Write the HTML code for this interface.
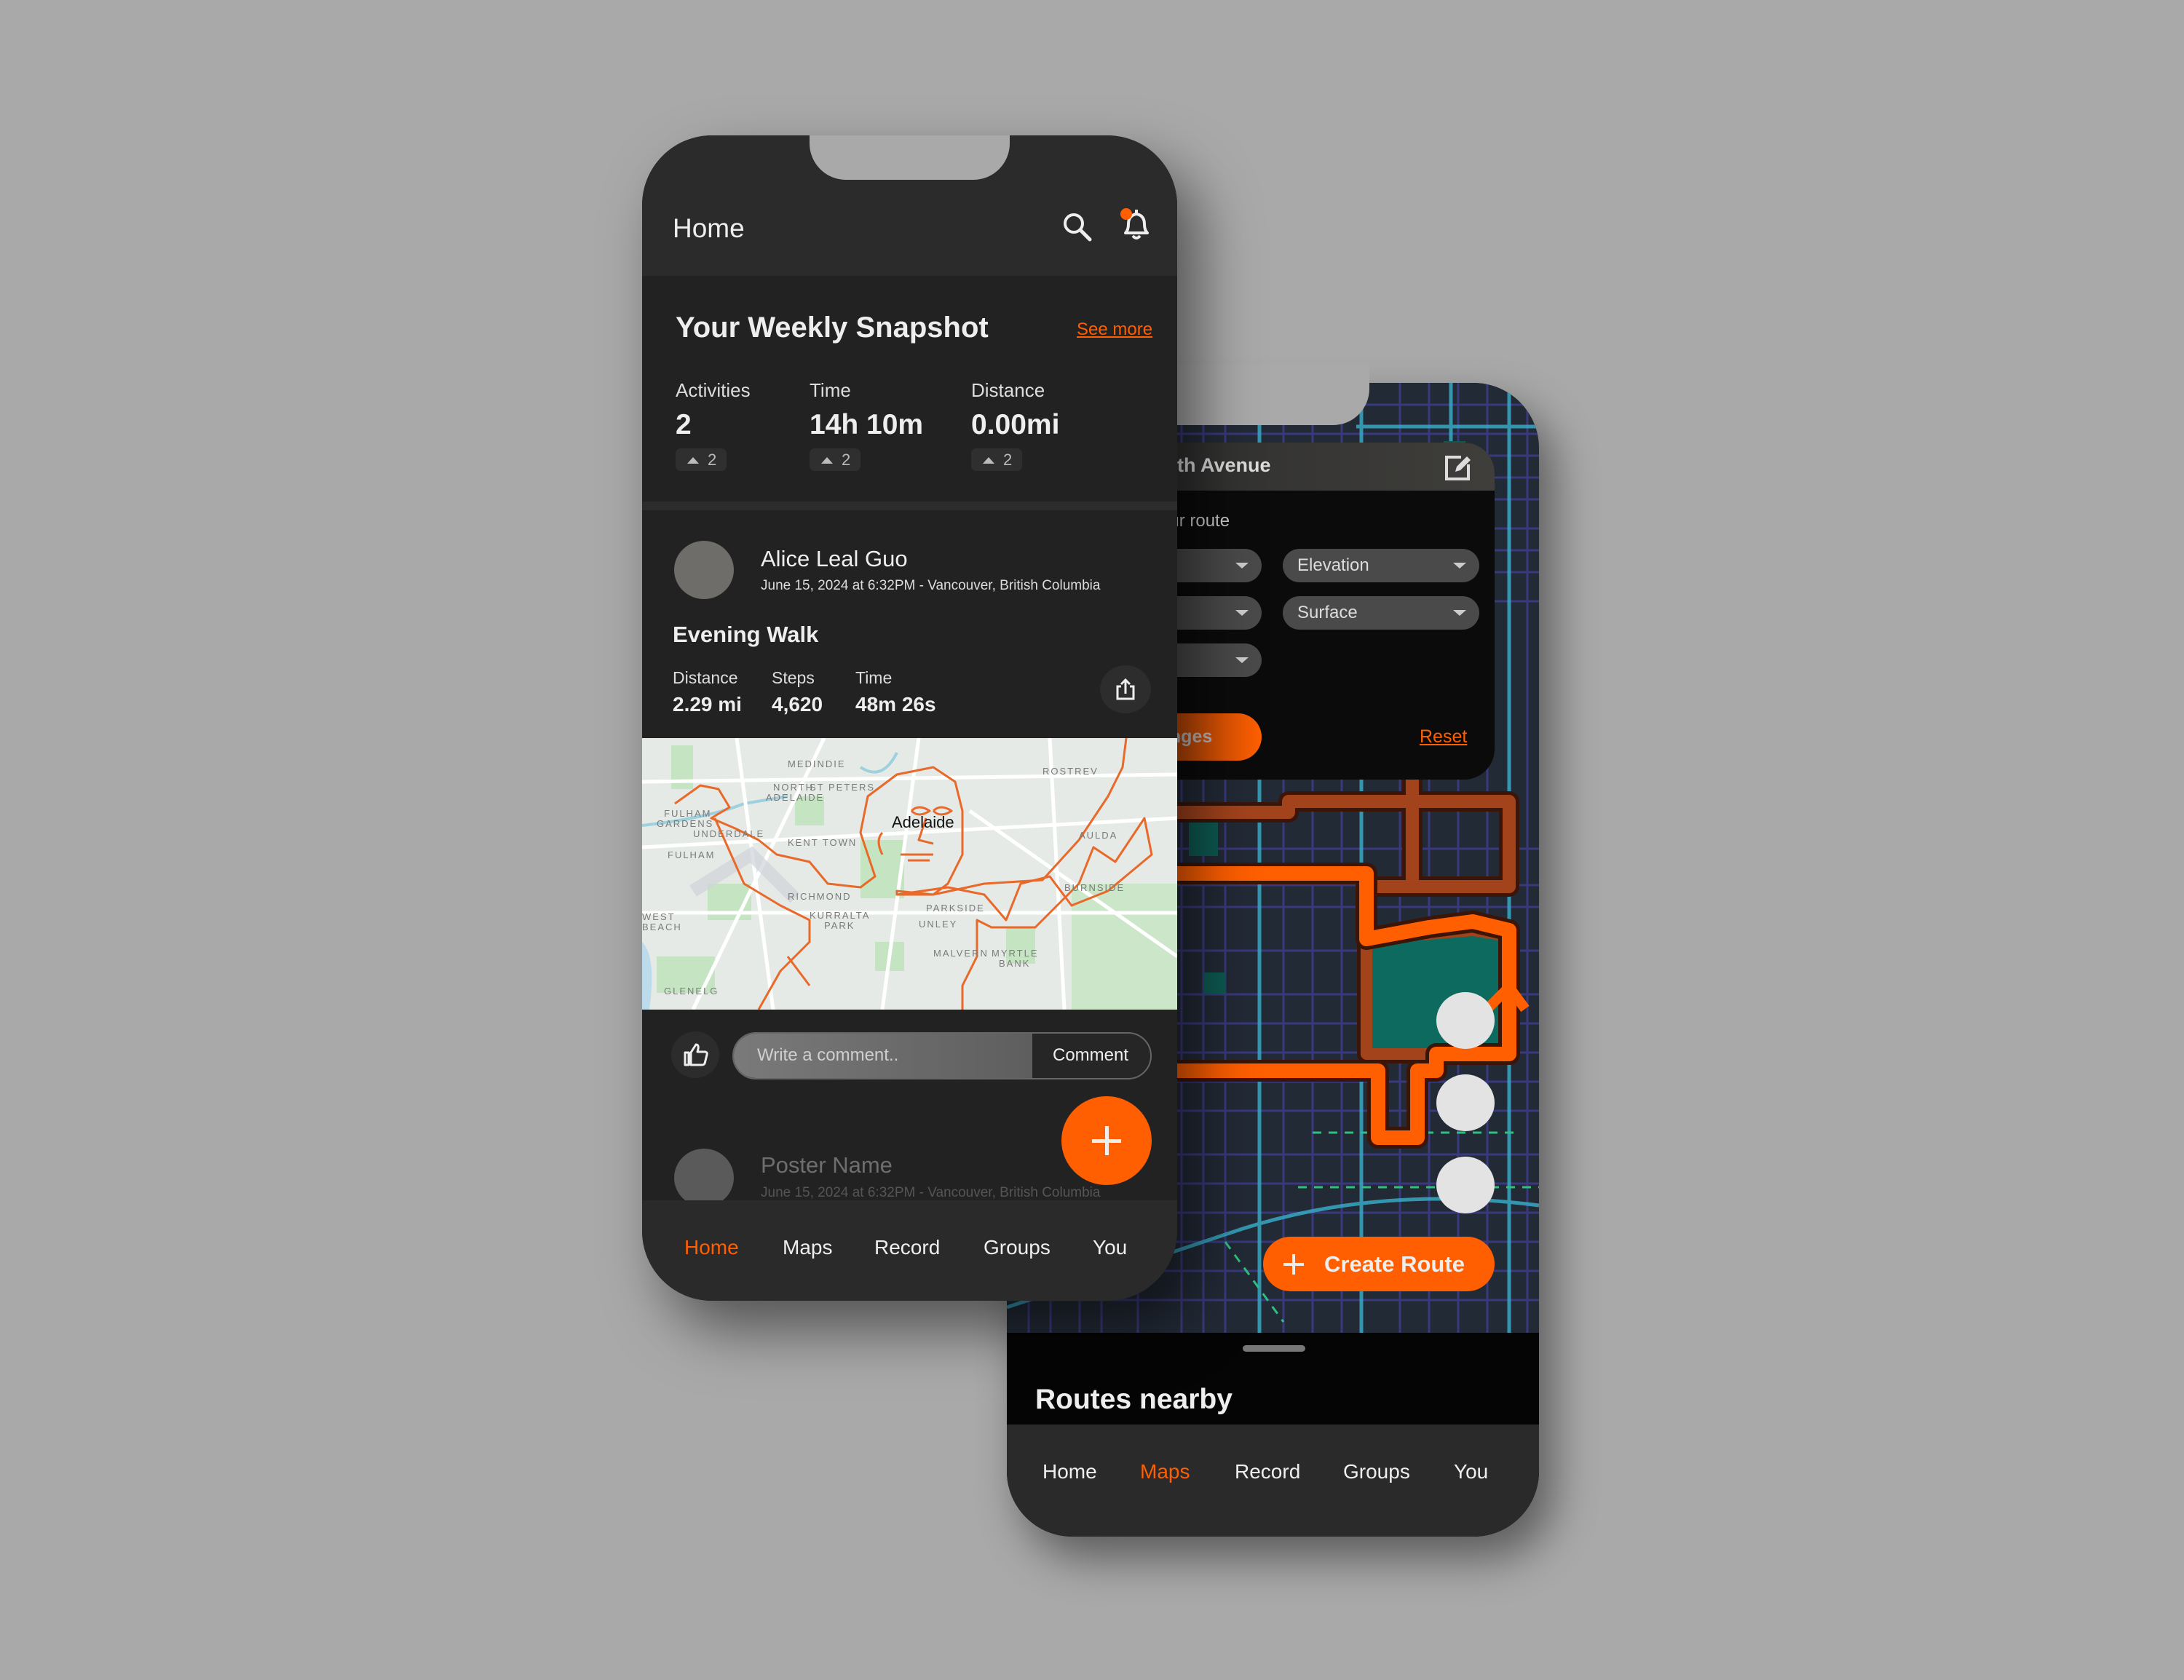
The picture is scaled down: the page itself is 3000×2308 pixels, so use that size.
<!DOCTYPE html>
<html><head><meta charset="utf-8"><style>
*{margin:0;padding:0;box-sizing:border-box}
body{width:3000px;height:2308px;background:#a9a9a9;position:relative;overflow:hidden;font-family:"Liberation Sans",sans-serif;color:#eee}
.a{position:absolute;white-space:nowrap}
#back{position:absolute;left:1383px;top:526px;width:731px;height:1585px;border-radius:90px;overflow:hidden;background:#1c2430;box-shadow:20px 30px 60px rgba(0,0,0,.45)}
#front{position:absolute;left:882px;top:186px;width:735px;height:1601px;border-radius:96px;overflow:hidden;background:#222;box-shadow:30px 40px 80px rgba(0,0,0,.5)}
.lbl{font-size:26px;color:#ddd}
.val{font-size:39px;font-weight:bold;color:#eee}
.badge{position:absolute;width:70px;height:31px;background:#2f2f2f;border-radius:7px;font-size:22px;color:#bbb;padding-left:16px;line-height:31px}
.badge:before{content:"";display:inline-block;width:0;height:0;border-left:8px solid transparent;border-right:8px solid transparent;border-bottom:9px solid #bbb;margin-right:12px;vertical-align:2px}
.nav{font-size:28px;color:#eee}
.dd{position:absolute;height:46px;border-radius:23px;background:#4a4a4a;font-size:24px;color:#ddd;line-height:46px;padding-left:20px}
.dd:after{content:"";position:absolute;right:18px;top:19px;border-left:9px solid transparent;border-right:9px solid transparent;border-top:8px solid #ccc}
.wc{position:absolute;width:80px;height:78px;border-radius:50%;background:#e3e3e3}
</style></head><body>

<div id="back">
<svg class="a" style="left:0;top:0" width="731" height="1305" viewBox="0 0 731 1305">
<rect width="731" height="1305" fill="#222a36"/>
<g stroke="#433f95" stroke-width="3" fill="none" opacity=".75">
<path d="M30 0V1305M60 0V1305M100 0V1305M130 0V1305M180 0V1305M240 0V1305M270 0V1305M300 0V1305M380 0V1305M420 0V1305M460 0V1305M540 0V1305M580 0V1305M620 0V1305M660 0V1305M715 0V1305"/>
<path d="M0 30H731M0 70H731M0 100H731M0 130H731M0 160H731M0 200H731M0 230H731M0 260H731M0 300H731M0 640H731M0 690H731M0 720H731M0 780H731M0 840H731M0 880H731M0 920H731M0 960H731M0 1000H731M0 1060H731M0 1100H731M0 1140H731M0 1180H731M0 1220H731M0 1260H731"/>
</g>
<g stroke="#38a9c4" stroke-width="5" fill="none" opacity=".85">
<path d="M347 0V1305M487 0V1305M690 0V1305M610 0V300"/>
<path d="M0 1270L300 1170Q500 1100 731 1130"/>
<path d="M480 60H731"/>
</g>
<g stroke="#2ec07f" stroke-width="3" stroke-dasharray="12 10" fill="none">
<path d="M400 1105H731M420 1030H700M300 1180L380 1290"/>
</g>
<rect x="180" y="780" width="40" height="30" fill="#0e5a52"/><rect x="270" y="810" width="30" height="30" fill="#0e5a52"/><rect x="600" y="80" width="30" height="50" fill="#0e5a52"/><rect x="250" y="590" width="40" height="60" fill="#0e5a52"/>
<rect x="0" y="900" width="80" height="160" fill="#0e4a44"/>
<g fill="none" stroke-linejoin="round">
<path d="M0 590H387V575H690V692H502M557 540V692" stroke="#3a1508" stroke-width="28"/>
<path d="M0 590H387V575H690V692H502M557 540V692" stroke="#a3431c" stroke-width="18"/>
<path d="M494 769V764L640 752L690 760V922H494Z" fill="#0c6a5e" stroke="#3a1508" stroke-width="26"/>
<path d="M494 769V764L640 752L690 760V922H494Z" fill="#0c6a5e" stroke="#a3431c" stroke-width="16"/>
<path d="M0 674H494V764L580 748L640 740L690 752V922H590V945H564V1037H510V945H0" stroke="#3a1508" stroke-width="30"/>
<path d="M0 674H494V764L580 748L640 740L690 752V922H590V945H564V1037H510V945H0" stroke="#ff5f00" stroke-width="20"/>
<path d="M660 860L690 830L712 860" stroke="#ff5f00" stroke-width="14"/>
</g>
<text x="200" y="1030" font-family="Liberation Sans" font-size="56" fill="none" stroke="#ccc" stroke-width="3">0</text>
</svg>
<div class="wc" style="left:590px;top:837px"></div>
<div class="wc" style="left:590px;top:950px"></div>
<div class="wc" style="left:590px;top:1063px"></div>
<div class="a" style="left:352px;top:1173px;width:318px;height:75px;border-radius:38px;background:#ff5f00;color:#eee;font-size:31px;font-weight:bold;line-height:75px;padding-left:84px">Create Route</div>
<div class="a" style="left:380px;top:1209px;width:28px;height:4px;background:#eee"></div>
<div class="a" style="left:392px;top:1197px;width:4px;height:28px;background:#eee"></div>
<!-- panel -->
<div class="a" style="left:150px;top:82px;width:520px;height:463px;border-radius:42px;background:#0b0b0b;overflow:hidden">
 <div class="a" style="left:0;top:0;width:520px;height:66px;background:linear-gradient(90deg,#2e2e2e,#3f3e3b)"></div>
 <div class="a" style="left:84px;top:16px;font-size:27px;font-weight:bold;color:#ddd">th Avenue</div>
 <svg class="a" style="left:450px;top:14px" width="40" height="40" viewBox="0 0 40 40"><path d="M24 6H4V36H34V16" fill="none" stroke="#ddd" stroke-width="4"/><path d="M16 26L18 19L32 5L37 10L23 24Z" fill="#ddd"/></svg>
 <div class="a" style="left:60px;top:94px;font-size:24px;color:#ccc">our route</div>
 <div class="dd" style="left:-60px;top:146px;width:260px"></div>
 <div class="dd" style="left:-60px;top:211px;width:260px"></div>
 <div class="dd" style="left:-60px;top:276px;width:260px"></div>
 <div class="dd" style="left:229px;top:146px;width:270px">Elevation</div>
 <div class="dd" style="left:229px;top:211px;width:270px">Surface</div>
 <div class="a" style="left:-60px;top:372px;width:260px;height:65px;border-radius:33px;background:linear-gradient(90deg,#6a2a10,#ff5f00);font-size:25px;font-weight:bold;color:#bbb;line-height:65px;padding-left:120px">anges</div>
 <div class="a" style="left:417px;top:390px;font-size:25px;color:#ff5f00;text-decoration:underline">Reset</div>
</div>
<!-- sheet -->
<div class="a" style="left:0;top:1305px;width:731px;height:280px;background:#050505"></div>
<div class="a" style="left:324px;top:1322px;width:86px;height:9px;border-radius:5px;background:#777"></div>
<div class="a" style="left:39px;top:1375px;font-size:39px;font-weight:bold;color:#eee">Routes nearby</div>
<div class="a" style="left:0;top:1431px;width:731px;height:154px;background:#2a2a2a"></div>
<div class="a nav" style="left:49px;top:1480px">Home</div>
<div class="a nav" style="left:183px;top:1480px;color:#ff5f00">Maps</div>
<div class="a nav" style="left:313px;top:1480px">Record</div>
<div class="a nav" style="left:462px;top:1480px">Groups</div>
<div class="a nav" style="left:614px;top:1480px">You</div>
</div>
<!-- back notch -->
<div class="a" style="left:1300px;top:500px;width:581px;height:84px;background:#a9a9a9;border-radius:0 0 50px 50px"></div>

<div id="front">
<div class="a" style="left:0;top:0;width:735px;height:193px;background:#2b2b2b"></div>
<div class="a" style="left:230px;top:0;width:275px;height:61px;background:#a9a9a9;border-radius:0 0 50px 50px"></div>
<div class="a" style="left:42px;top:107px;font-size:37px;color:#eee">Home</div>
<svg class="a" style="left:576px;top:104px" width="44" height="44" viewBox="0 0 44 44"><circle cx="17" cy="17" r="12" fill="none" stroke="#eee" stroke-width="4"/><path d="M26 26L39 39" stroke="#eee" stroke-width="5" stroke-linecap="round"/></svg>
<svg class="a" style="left:656px;top:98px" width="46" height="50" viewBox="0 0 46 50"><path d="M8 36Q12 32 12 24Q12 12 23 10Q34 12 34 24Q34 32 38 36Z" fill="none" stroke="#eee" stroke-width="4" stroke-linejoin="round"/><path d="M23 4V10M18 40Q23 46 28 40" stroke="#eee" stroke-width="4" fill="none"/><circle cx="9" cy="10" r="8" fill="#ff5f00"/></svg>
<div class="a" style="left:46px;top:242px;font-size:40px;font-weight:bold;color:#eee">Your Weekly Snapshot</div>
<div class="a" style="left:597px;top:253px;font-size:24px;color:#ff5f00;text-decoration:underline">See more</div>
<div class="a lbl" style="left:46px;top:335px">Activities</div>
<div class="a lbl" style="left:230px;top:335px">Time</div>
<div class="a lbl" style="left:452px;top:335px">Distance</div>
<div class="a val" style="left:46px;top:376px">2</div>
<div class="a val" style="left:230px;top:376px">14h 10m</div>
<div class="a val" style="left:452px;top:376px">0.00mi</div>
<div class="badge" style="left:46px;top:430px">2</div>
<div class="badge" style="left:230px;top:430px">2</div>
<div class="badge" style="left:452px;top:430px">2</div>
<div class="a" style="left:0;top:503px;width:735px;height:12px;background:#2c2c2c"></div>
<div class="a" style="left:44px;top:557px;width:82px;height:80px;border-radius:50%;background:#6f6d69"></div>
<div class="a" style="left:163px;top:564px;font-size:31px;color:#eee">Alice Leal Guo</div>
<div class="a" style="left:163px;top:608px;font-size:19px;color:#ddd">June 15, 2024 at 6:32PM - Vancouver, British Columbia</div>
<div class="a" style="left:42px;top:668px;font-size:31px;font-weight:bold;color:#eee">Evening Walk</div>
<div class="a" style="left:42px;top:732px;font-size:23px;color:#ddd">Distance</div>
<div class="a" style="left:178px;top:732px;font-size:23px;color:#ddd">Steps</div>
<div class="a" style="left:293px;top:732px;font-size:23px;color:#ddd">Time</div>
<div class="a" style="left:42px;top:766px;font-size:28px;font-weight:bold;color:#eee">2.29 mi</div>
<div class="a" style="left:178px;top:766px;font-size:28px;font-weight:bold;color:#eee">4,620</div>
<div class="a" style="left:293px;top:766px;font-size:28px;font-weight:bold;color:#eee">48m 26s</div>
<div class="a" style="left:629px;top:728px;width:70px;height:66px;border-radius:50%;background:#2d2d2d"></div>
<svg class="a" style="left:648px;top:745px" width="32" height="32" viewBox="0 0 32 32"><path d="M10 12H5V29H27V12H22M16 22V3M10 9L16 3L22 9" fill="none" stroke="#eee" stroke-width="3"/></svg>
<!-- map -->
<svg class="a" style="left:0;top:828px" width="735" height="373" viewBox="0 0 735 373">
<rect width="735" height="373" fill="#e6eae6"/>
<g fill="#c5e5c2"><rect x="40" y="10" width="30" height="60"/><rect x="300" y="140" width="60" height="80"/><rect x="210" y="80" width="40" height="40"/><rect x="500" y="260" width="40" height="50"/><rect x="590" y="200" width="145" height="173" opacity=".8"/><rect x="90" y="200" width="60" height="50"/><rect x="20" y="300" width="80" height="50"/><rect x="320" y="280" width="40" height="40"/></g>
<path d="M0 280Q20 300 10 373H0Z" fill="#bcdcec"/>
<path d="M0 120Q90 110 140 90L200 80M300 40Q330 60 350 20" stroke="#9fd0de" stroke-width="4" fill="none"/>
<g stroke="#fff" stroke-width="5" fill="none"><path d="M0 150L735 110M0 240H735M130 0L180 373M380 0L330 373M560 0L580 373M0 60L735 50M250 0L70 373M450 100L735 300"/></g>
<path d="M70 210L150 160L210 220" stroke="#cfd3d8" stroke-width="18" fill="none" opacity=".7"/>
<g fill="none" stroke="#e8692a" stroke-width="3" stroke-linejoin="round">
<path d="M45 90L80 65L105 70L120 95L95 110L130 125L160 140L185 160L230 170L255 200L300 205L320 190L310 160L300 130L310 80L350 50L400 40L430 60L440 100L440 160L420 200L400 215L350 215L350 210L400 215L470 200L550 195L600 140L620 110L640 80L660 40L665 0"/>
<path d="M100 110L140 200L190 230L230 250L230 280L190 320L160 373M200 300L230 340M350 215L420 205L470 215L500 250L520 200L560 190L590 230L640 210L700 160L690 110L650 170L620 150L600 200L560 240L540 260L480 260L460 250L460 300L440 340L440 373"/>
<path d="M370 100Q380 90 395 100Q380 110 370 100M400 100Q410 90 425 100Q410 110 400 100M330 160Q320 140 330 130M390 110L380 140L400 145M355 160H400M365 168H395"/>
</g>
<g font-family="Liberation Sans" font-size="13" fill="#7a7a7a" letter-spacing="2">
<text x="200" y="40">MEDINDIE</text><text x="180" y="72">NORTH</text><text x="170" y="86">ADELAIDE</text><text x="230" y="72">ST PETERS</text><text x="30" y="108">FULHAM</text><text x="20" y="122">GARDENS</text><text x="70" y="136">UNDERDALE</text><text x="35" y="165">FULHAM</text><text x="200" y="148">KENT TOWN</text><text x="550" y="50">ROSTREV</text><text x="600" y="138">AULDA</text><text x="200" y="222">RICHMOND</text><text x="230" y="248">KURRALTA</text><text x="250" y="262">PARK</text><text x="390" y="238">PARKSIDE</text><text x="380" y="260">UNLEY</text><text x="400" y="300">MALVERN</text><text x="480" y="300">MYRTLE</text><text x="490" y="314">BANK</text><text x="30" y="352">GLENELG</text><text x="0" y="250">WEST</text><text x="0" y="264">BEACH</text><text x="580" y="210">BURNSIDE</text>
</g>
<text x="343" y="123" font-family="Liberation Sans" font-size="22" fill="#111">Adelaide</text>
</svg>
<div class="a" style="left:40px;top:1231px;width:66px;height:64px;border-radius:50%;background:#2c2c2c"></div>
<svg class="a" style="left:56px;top:1246px" width="36" height="34" viewBox="0 0 36 34"><path d="M3 14H8V31H3ZM11 14L18 3Q22 3 21 9L20 13H31Q34 14 33 17L30 29Q29 31 26 31H11Z" fill="none" stroke="#eee" stroke-width="3" stroke-linejoin="round"/></svg>
<div class="a" style="left:124px;top:1232px;width:576px;height:65px;border-radius:33px;border:2px solid #666;background:#262626;overflow:hidden">
 <div class="a" style="left:0;top:0;width:410px;height:61px;background:linear-gradient(90deg,#7a7a7a,#5e5e5e)"></div>
 <div class="a" style="left:32px;top:16px;font-size:24px;color:#cfcfcf">Write a comment..</div>
 <div class="a" style="left:438px;top:16px;font-size:24px;color:#eee">Comment</div>
</div>
<div class="a" style="left:163px;top:1397px;font-size:31px;color:#6e6e6e">Poster Name</div>
<div class="a" style="left:44px;top:1392px;width:82px;height:80px;border-radius:50%;background:#5a5a5a"></div>
<div class="a" style="left:163px;top:1442px;font-size:19px;color:#555">June 15, 2024 at 6:32PM - Vancouver, British Columbia</div>
<div class="a" style="left:0;top:1463px;width:735px;height:138px;background:#2a2a2a"></div>
<div class="a" style="left:576px;top:1320px;width:124px;height:122px;border-radius:50%;background:#ff5f00"></div>
<div class="a" style="left:618px;top:1379px;width:40px;height:5px;background:#eee"></div>
<div class="a" style="left:636px;top:1361px;width:5px;height:40px;background:#eee"></div>
<div class="a nav" style="left:58px;top:1512px;color:#ff5f00">Home</div>
<div class="a nav" style="left:193px;top:1512px">Maps</div>
<div class="a nav" style="left:319px;top:1512px">Record</div>
<div class="a nav" style="left:469px;top:1512px">Groups</div>
<div class="a nav" style="left:619px;top:1512px">You</div>
</div>
</body></html>
